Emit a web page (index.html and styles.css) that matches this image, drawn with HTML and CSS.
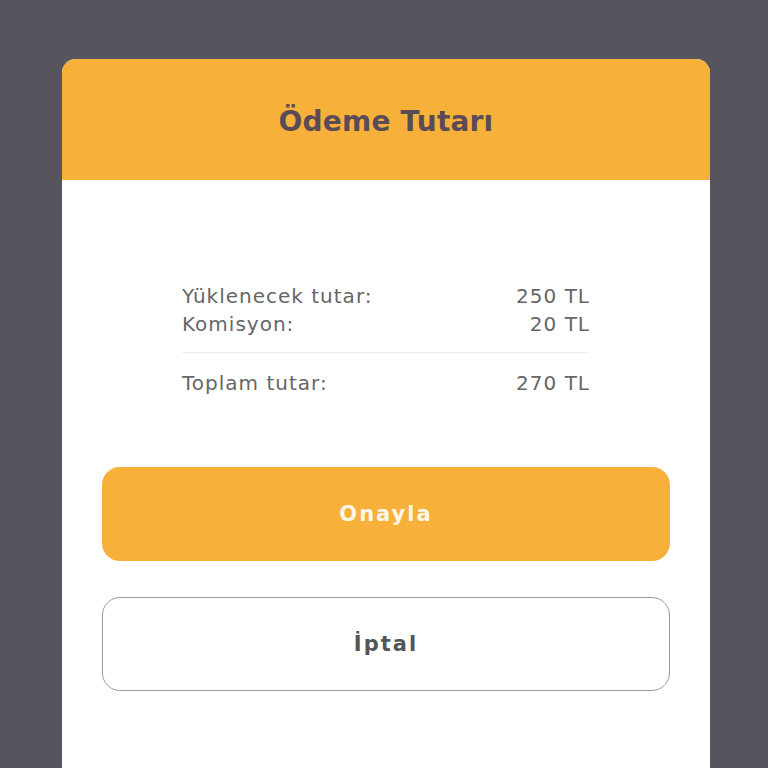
FILE: index.html
```html
<!DOCTYPE html>
<html lang="tr">
<head>
<meta charset="utf-8">
<link rel="stylesheet" href="styles.css">
</head>
<body>
<div class="page">
  <div class="card">
    <div class="card-head">
      <h1 class="title">Ödeme Tutarı</h1>
    </div>
    <div class="card-body">
      <div class="summary">
        <div class="row"><span>Yüklenecek tutar:</span><span>250 TL</span></div>
        <div class="row"><span>Komisyon:</span><span>20 TL</span></div>
        <div class="divider"></div>
        <div class="row"><span>Toplam tutar:</span><span>270 TL</span></div>
      </div>
      <button class="btn btn-primary">Onayla</button>
      <button class="btn btn-outline">İptal</button>
    </div>
  </div>
</div>
</body>
</html>
```

FILE: styles.css
```css
html, body {
  margin: 0;
  padding: 0;
  height: 100%;
  overflow: hidden;
}
body {
  background: #56545d;
  font-family: "DejaVu Sans", "Open Sans", sans-serif;
}
.page {
  padding: 59px 58px 0 62px;
}
.card {
  background: #ffffff;
  border-radius: 14px 14px 0 0;
  overflow: hidden;
  height: 709px;
}
.card-head {
  background: #f7b13b;
  height: 121px;
  box-sizing: border-box;
  padding-top: 4px;
  display: flex;
  align-items: center;
  justify-content: center;
}
.title {
  margin: 0;
  font-size: 28px;
  font-weight: 700;
  color: #5a4b56;
  letter-spacing: 0.2px;
}
.card-body {
  padding: 102px 40px 0 40px;
  display: flex;
  flex-direction: column;
}
.summary {
  margin: 0 80px;
  color: #666666;
  font-size: 20px;
  letter-spacing: 1px;
}
.row {
  display: flex;
  justify-content: space-between;
  line-height: 28px;
}
.divider {
  height: 1px;
  background: #eeeeee;
  margin: 14px 0 16px;
}
.btn {
  font-family: inherit;
  height: 94px;
  border-radius: 18px;
  font-size: 21px;
  font-weight: 700;
  letter-spacing: 2px;
  cursor: pointer;
}
.btn-primary {
  margin-top: 70px;
  background: #f7b13b;
  border: none;
  color: #fdf6ea;
}
.btn-outline {
  margin-top: 36px;
  background: #ffffff;
  border: 1.5px solid #9a9a9a;
  color: #555555;
}
```
